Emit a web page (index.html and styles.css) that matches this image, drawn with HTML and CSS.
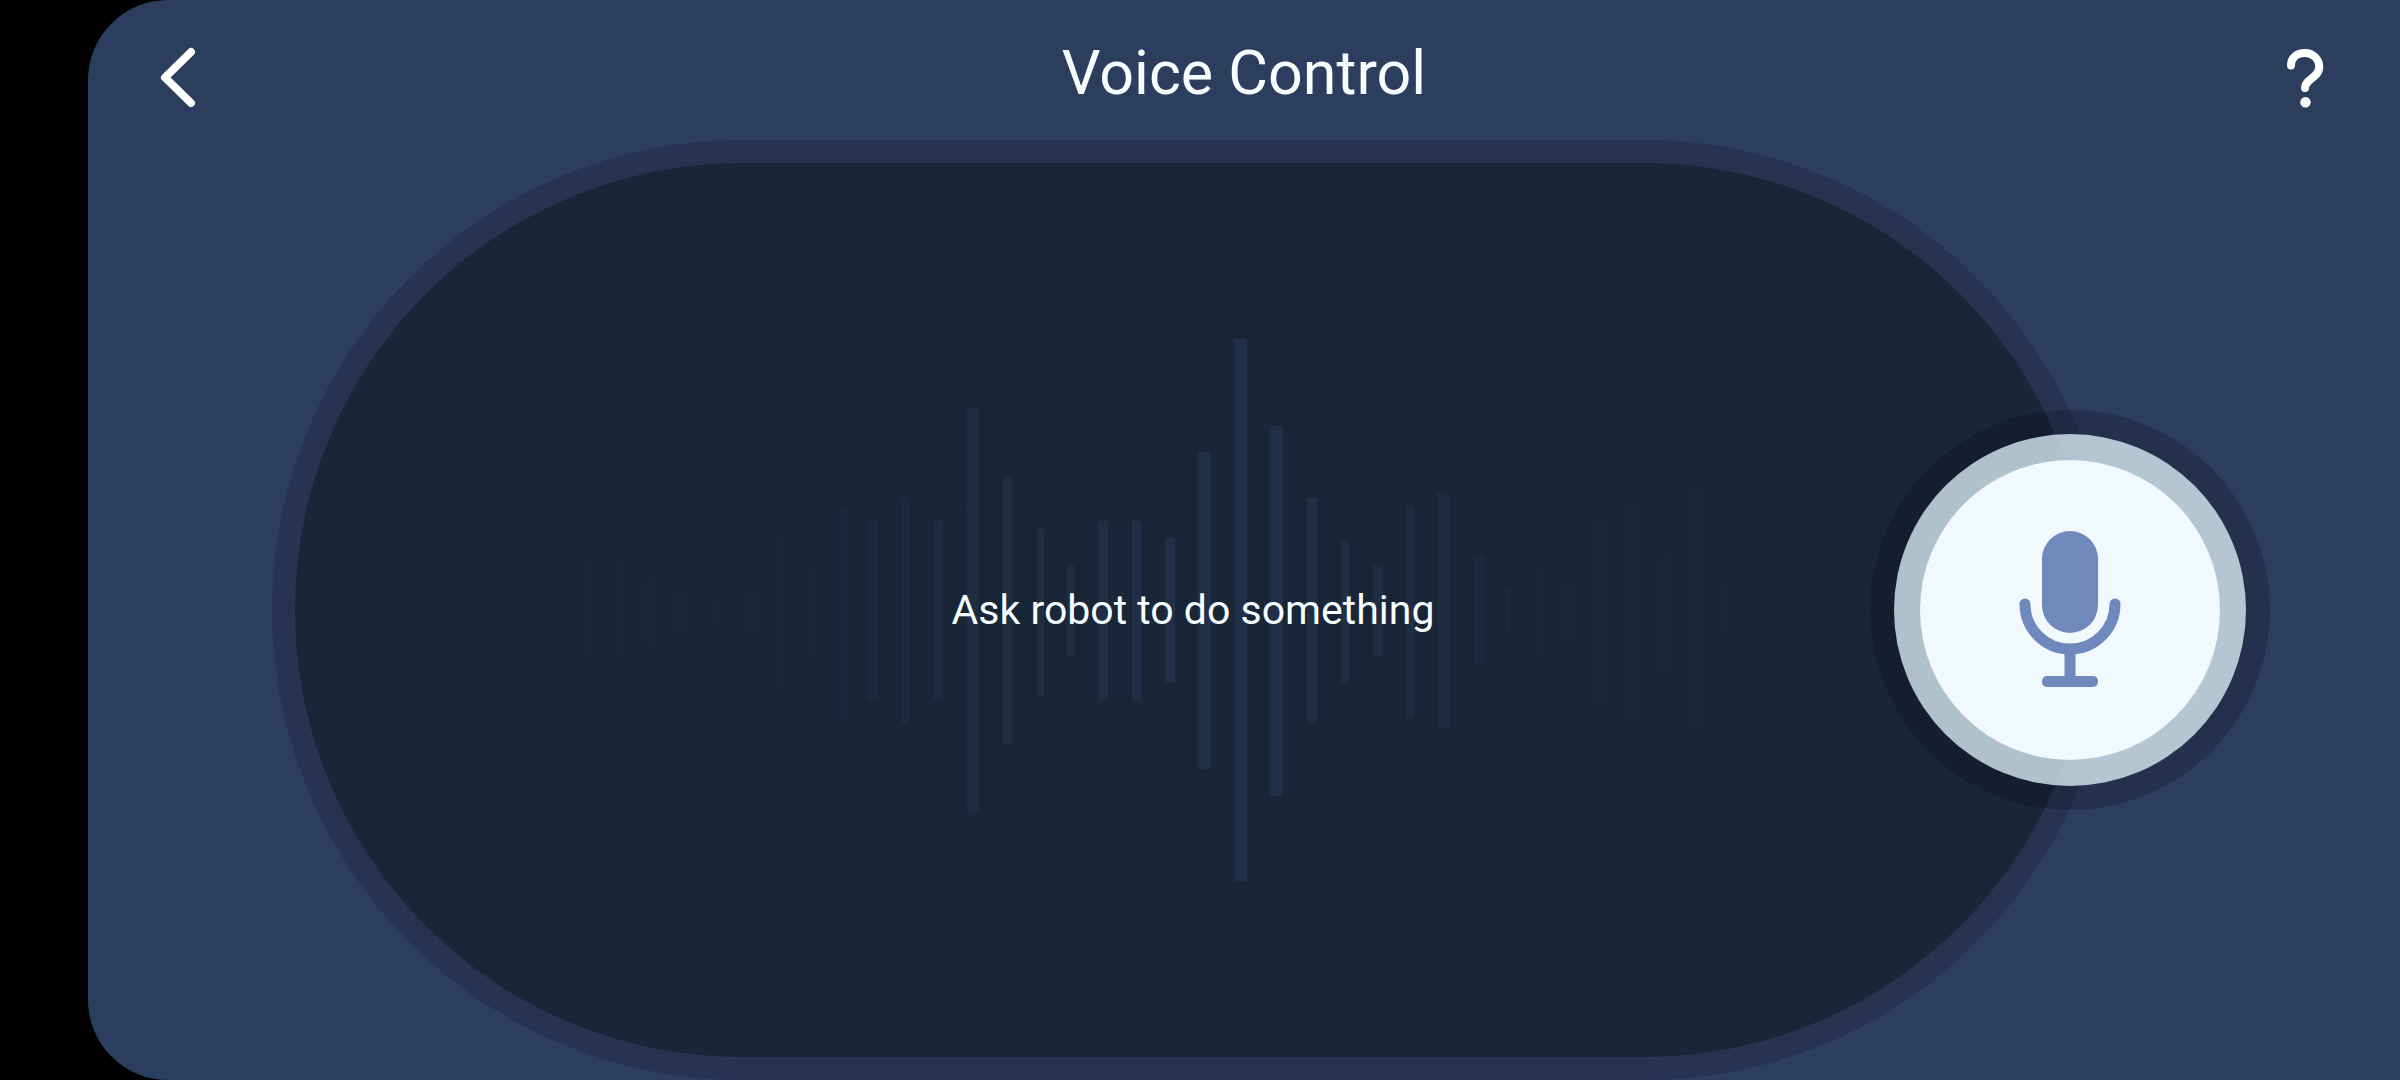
FILE: index.html
```html
<!DOCTYPE html>
<html lang="en">
<head>
<meta charset="utf-8">
<meta name="viewport" content="width=device-width, initial-scale=1">
<title>Voice Control</title>
<link rel="stylesheet" href="styles.css">
</head>
<body>
<div class="screen">
  <header class="topbar">
    <button class="icon-button" type="button" aria-label="Back">
      <svg class="icon" viewBox="0 3 64 80" aria-hidden="true">
        <path d="M43 22 17 47.500 43 73"/>
      </svg>
    </button>
    <h1 class="title">Voice Control</h1>
    <button class="icon-button" type="button" aria-label="Help">
      <svg class="icon" viewBox="0 3 64 80" aria-hidden="true">
        <path d="M15 35.500C15 27.500 21 23 29 23C37 23 43.300 29 43.300 37C43.300 47.500 29 49 29 58"/>
        <circle class="icon-dot" cx="29.500" cy="72.300" r="5.200"/>
      </svg>
    </button>
  </header>
  <main class="stage">
    <section class="console">
      <svg class="wave" viewBox="585 338 1216 542" aria-hidden="true">
        <defs>
          <linearGradient id="fade" gradientUnits="userSpaceOnUse" x1="585" y1="0" x2="1801" y2="0">
            <stop class="fade-edge" offset="0"/>
            <stop class="fade-low" offset=".15"/>
            <stop class="fade-mid" offset=".33"/>
            <stop class="fade-peak" offset=".5"/>
            <stop class="fade-peak" offset=".57"/>
            <stop class="fade-mid" offset=".66"/>
            <stop class="fade-low" offset=".8"/>
            <stop class="fade-edge" offset="1"/>
          </linearGradient>
        </defs>
        <g fill="url(#fade)">
          <rect x="585" y="560" width="7" height="96"/>
          <rect x="617" y="560" width="7" height="96"/>
          <rect x="643" y="576" width="11" height="70"/>
          <rect x="675" y="587" width="11" height="46"/>
          <rect x="711" y="598" width="11" height="24"/>
          <rect x="747" y="592" width="11" height="40"/>
          <rect x="777" y="532" width="7" height="155"/>
          <rect x="809" y="568" width="7" height="85"/>
          <rect x="840" y="507" width="7" height="211"/>
          <rect x="867" y="520" width="11" height="180"/>
          <rect x="901" y="496" width="8" height="227"/>
          <rect x="933" y="520" width="10" height="180"/>
          <rect x="967" y="407" width="12" height="405"/>
          <rect x="1003" y="474" width="9" height="270"/>
          <rect x="1037" y="528" width="7" height="167"/>
          <rect x="1067" y="564" width="7" height="91"/>
          <rect x="1098" y="520" width="10" height="180"/>
          <rect x="1132" y="520" width="9" height="180"/>
          <rect x="1165" y="537" width="10" height="145"/>
          <rect x="1198" y="451" width="13" height="317"/>
          <rect x="1234" y="338" width="13" height="542"/>
          <rect x="1270" y="425" width="13" height="370"/>
          <rect x="1307" y="497" width="10" height="225"/>
          <rect x="1341" y="540" width="8" height="143"/>
          <rect x="1373" y="564" width="10" height="91"/>
          <rect x="1406" y="506" width="8" height="210"/>
          <rect x="1437" y="491" width="13" height="236"/>
          <rect x="1474" y="555" width="10" height="109"/>
          <rect x="1505" y="586" width="6" height="44"/>
          <rect x="1537" y="568" width="7" height="85"/>
          <rect x="1563" y="585" width="10" height="54"/>
          <rect x="1595" y="519" width="9" height="184"/>
          <rect x="1626" y="503" width="12" height="217"/>
          <rect x="1659" y="553" width="12" height="119"/>
          <rect x="1689" y="488" width="14" height="240"/>
          <rect x="1720" y="584" width="8" height="48"/>
        </g>
      </svg>
      <p class="prompt">Ask robot to do something</p>
    </section>
    <button class="mic-button" type="button" aria-label="Speak">
      <span class="mic-ring">
        <span class="mic-face">
          <svg class="mic-icon" viewBox="0 0 104 160" aria-hidden="true">
            <rect class="mic-solid" x="24" y="1" width="56" height="102" rx="28"/>
            <path class="mic-line" d="M7 74a45 45 0 0 0 90 0M52 120V148"/>
            <rect class="mic-solid" x="24" y="146" width="56" height="11" rx="5"/>
          </svg>
        </span>
      </span>
    </button>
  </main>
</div>
</body>
</html>
```
FILE: styles.css
```css
* {
  box-sizing: border-box;
}

body {
  margin: 0;
  background: #000;
  color: #f8fdff;
  font-family: Roboto, "Liberation Sans", sans-serif;
}

button {
  padding: 0;
  border: 0;
  background: none;
  color: inherit;
  cursor: pointer;
}

.screen {
  display: flex;
  flex-direction: column;
  min-height: 100vh;
  margin-left: 88px;
  border-radius: 80px 0 0 80px;
  background: #2c3e5e;
}

.topbar {
  display: grid;
  grid-template-columns: 64px 1fr 64px;
  align-items: center;
  height: 140px;
  padding: 6px 60px 0;
}

.title {
  margin: 0;
  font-size: 61px;
  font-weight: 400;
  line-height: 72px;
  text-align: center;
}

.icon-button {
  height: 80px;
}

.icon {
  display: block;
  width: 64px;
  height: 80px;
  fill: none;
  stroke: #fff;
  stroke-width: 8;
  stroke-linecap: round;
  stroke-linejoin: round;
}

.icon-dot {
  fill: #fff;
  stroke: none;
}

.stage {
  display: flex;
  flex: 1;
  align-items: center;
  padding: 0 130px 0 184px;
}

.console {
  display: grid;
  flex: 1;
  align-self: stretch;
  place-items: center;
  border: 23px solid #263452;
  border-radius: 9999px;
  background: #182638;
}

.wave,
.prompt {
  grid-area: 1 / 1;
}

.wave {
  width: 100%;
  max-width: 1216px;
}

.fade-edge,
.fade-low,
.fade-mid,
.fade-peak {
  stop-color: #203048;
}

.fade-edge {
  stop-opacity: .12;
}

.fade-low {
  stop-opacity: .2;
}

.fade-mid {
  stop-opacity: .7;
}

.fade-peak {
  stop-opacity: 1;
}

.prompt {
  margin: 0;
  font-size: 41px;
  line-height: 48px;
  z-index: 1;
}

.mic-button {
  flex: none;
  margin-left: -244px;
  padding: 24px;
  border-radius: 50%;
  background: rgba(12, 8, 24, .24);
}

.mic-ring {
  display: block;
  padding: 26px;
  border-radius: 50%;
  background: rgba(227, 248, 255, .75);
}

.mic-face {
  display: grid;
  place-items: center;
  width: 300px;
  height: 300px;
  border-radius: 50%;
  background: #f1f9ff;
}

.mic-icon {
  width: 104px;
  height: 160px;
}

.mic-solid {
  fill: #6f89bc;
}

.mic-line {
  fill: none;
  stroke: #6f89bc;
  stroke-width: 11;
  stroke-linecap: round;
}
```
